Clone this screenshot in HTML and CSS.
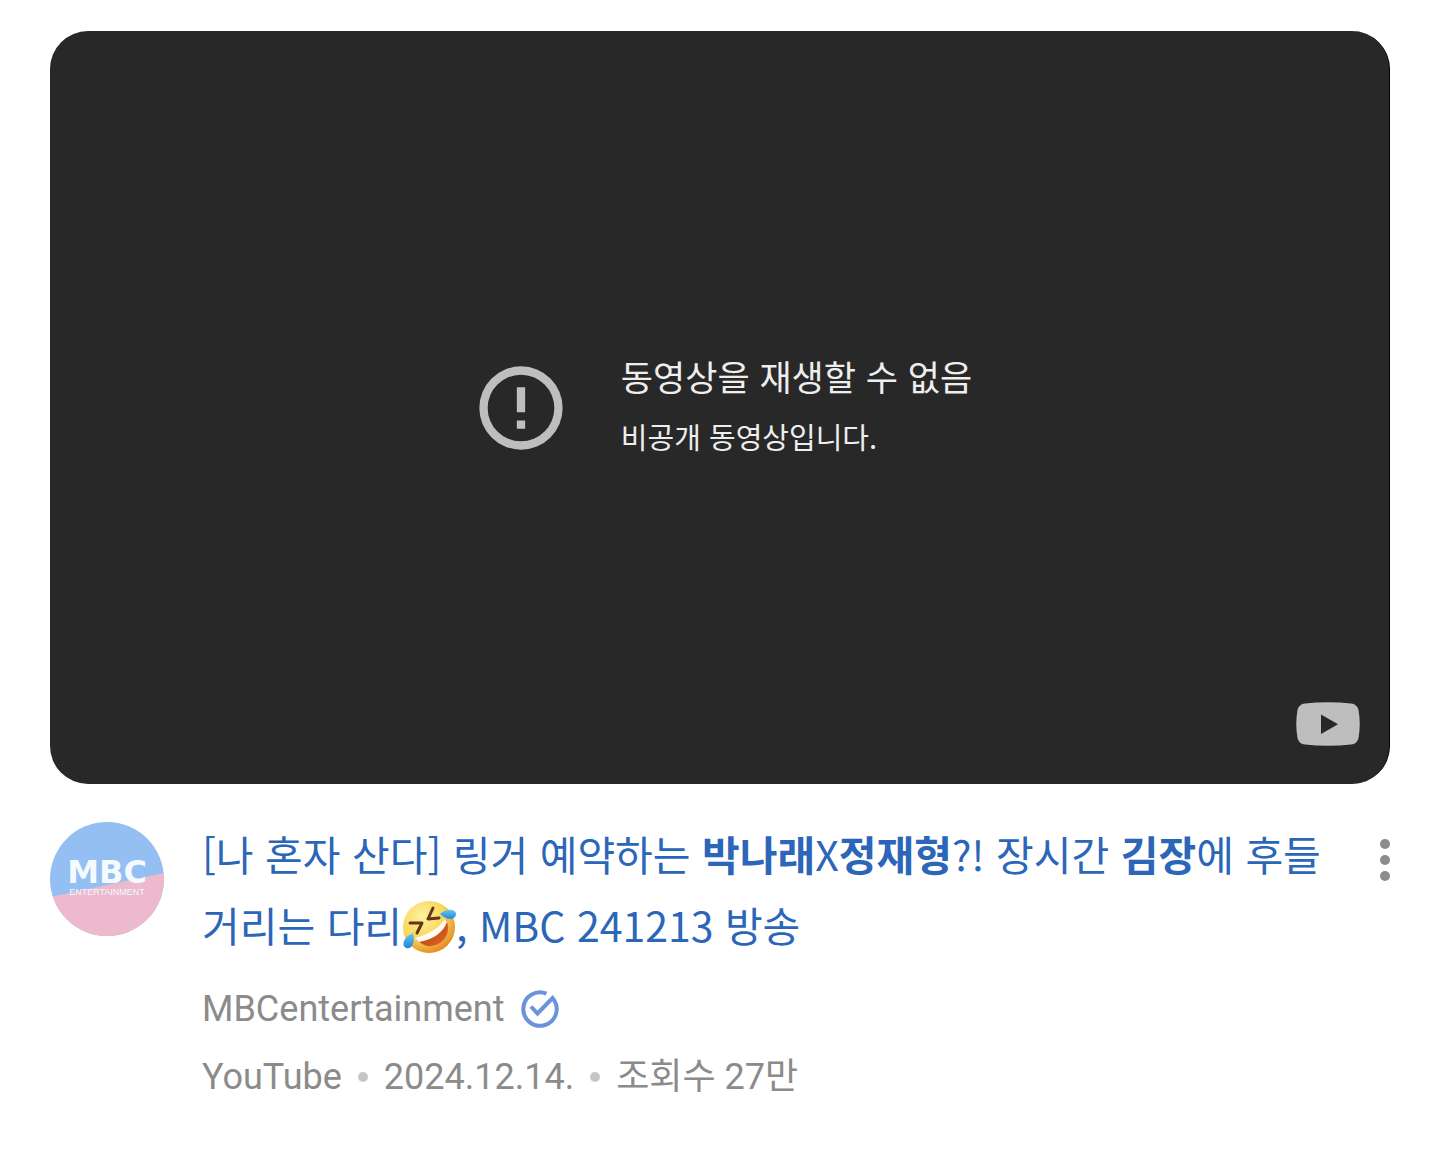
FILE: index.html
```html
<!DOCTYPE html>
<html lang="ko">
<head>
    <meta charset="UTF-8">
    <meta name="viewport" content="width=device-width, initial-scale=1.0">
    <title>MBCentertainment</title>
    <link rel="stylesheet" href="styles.css">
</head>
<body>
    <article class="card">
        <div class="player">
            <div class="error">
                <svg class="error-icon" viewBox="0 0 24 24" aria-hidden="true">
                    <path d="M11 7h2v6h-2zM11 15h2v2h-2zM12 2a10 10 0 1 0 0 20a10 10 0 0 0 0-20zM12 20a8 8 0 1 1 0-16a8 8 0 0 1 0 16z"/>
                </svg>
                <div class="error-text">
                    <p class="error-reason">동영상을 재생할 수 없음</p>
                    <p class="error-detail">비공개 동영상입니다.</p>
                </div>
            </div>
            <a class="youtube" href="#" aria-label="YouTube">
                <svg viewBox="0 0 64 44">
                    <path fill-rule="evenodd" d="M9 1.5Q32-1 55 1.5Q61 2 62.5 8Q65 22 62.5 36Q61 42 55 42.5Q32 45 9 42.5Q3 42 1.5 36Q-1 22 1.5 8Q3 2 9 1.5zM25 12.500V32L42 22.250z"/>
                </svg>
            </a>
        </div>

        <div class="info">
            <a class="avatar" href="#" aria-label="MBCentertainment">
                <svg viewBox="0 0 114 114">
                    <defs>
                        <clipPath id="round"><circle cx="57" cy="57" r="57"/></clipPath>
                    </defs>
                    <g clip-path="url(#round)">
                        <path fill="#94bff2" d="M0 0h114v114H0z"/>
                        <path fill="#edb9cd" d="M0 75L114 51v63H0z"/>
                    </g>
                    <text class="avatar-name" x="57" y="61" text-anchor="middle">MBC</text>
                    <text class="avatar-label" x="57" y="73" text-anchor="middle">ENTERTAINMENT</text>
                </svg>
            </a>

            <div class="details">
                <h3 class="title">
                    <a href="#">[나 혼자 산다] 링거 예약하는 <b>박나래</b>X<b>정재형</b>?! 장시간 <b>김장</b>에 후들거리는 다리<svg class="emoji" viewBox="0 0 54 54" role="img" aria-label="🤣">
                        <defs>
                            <radialGradient id="face" cx="36%" cy="30%" r="72%">
                                <stop offset="0" stop-color="#fff0a0"/>
                                <stop offset=".6" stop-color="#f8d75c"/>
                                <stop offset="1" stop-color="#e58f25"/>
                            </radialGradient>
                            <linearGradient id="tear" x1="0" y1="0" x2="0" y2="1">
                                <stop offset="0" stop-color="#65c8f6"/>
                                <stop offset="1" stop-color="#1f86db"/>
                            </linearGradient>
                            <linearGradient id="mouth" x1="0" y1="0" x2="1" y2="1">
                                <stop offset="0" stop-color="#a63211"/>
                                <stop offset="1" stop-color="#e46a25"/>
                            </linearGradient>
                        </defs>
                        <circle cx="27" cy="27" r="26" fill="url(#face)"/>
                        <path fill="url(#mouth)" d="M14 39Q36 34 44 19Q50 34 38 43Q25 51 14 39z"/>
                        <path fill="#fffdf2" d="M13 38Q35 32 43 19L45 22Q39 38 17 42z"/>
                        <g fill="none" stroke="#653611" stroke-width="3" stroke-linecap="round" stroke-linejoin="round">
                            <path d="M8 23L20 23L15 33"/>
                            <path d="M31 8L26 19L37 18"/>
                        </g>
                        <path fill="url(#tear)" d="M38 14Q44 9 50 10Q54 11 54 14Q54 18 49 19Q43 19 38 14z"/>
                        <path fill="url(#tear)" d="M11 33Q13 41 10 46Q8 49 4 48Q0 46 2 41Q4 36 11 33z"/>
                    </svg>, MBC 241213 방송</a>
                </h3>
                <div class="channel">
                    <a href="#">MBCentertainment</a>
                    <svg class="verified" viewBox="0 0 38 38" role="img" aria-label="인증됨">
                        <path d="M25.500 3.700A16.700 16.700 0 1 0 33 10L31.500 8L16.500 23.500L10 16.500"/>
                    </svg>
                </div>
                <div class="meta">
                    <span>YouTube</span>
                    <span class="dot"></span>
                    <span>2024.12.14.</span>
                    <span class="dot"></span>
                    <span>조회수 27만</span>
                </div>
            </div>

            <button class="more" type="button" aria-label="더보기">
                <svg viewBox="0 0 10 42">
                    <circle cx="5" cy="5" r="5"/>
                    <circle cx="5" cy="21" r="5"/>
                    <circle cx="5" cy="37" r="5"/>
                </svg>
            </button>
        </div>
    </article>
</body>
</html>
```

FILE: styles.css
```css
* {
    box-sizing: border-box;
}
body {
    margin: 0;
    background: #fff;
    font-family: "Noto Sans CJK KR", sans-serif;
    font-weight: 400;
}
h3, p {
    margin: 0;
}
a {
    color: inherit;
    text-decoration: none;
}
svg {
    display: block;
}
.card {
    padding: 31px 50px;
}
.player {
    position: relative;
    display: flex;
    align-items: center;
    justify-content: center;
    aspect-ratio: 1340 / 753;
    border-right: 1px solid #000;
    border-radius: 38px;
    background: #282828;
}
.error {
    display: flex;
    align-items: center;
    gap: 50px;
    padding-left: 4px;
    color: #eee;
}
.error-icon {
    width: 100px;
    fill: #bebebe;
}
.error-text {
    padding-bottom: 4px;
}
.error-reason {
    font-size: 35px;
    line-height: 60px;
}
.error-detail {
    font-size: 29px;
    line-height: 60px;
}
.youtube {
    position: absolute;
    right: 29px;
    bottom: 38px;
    width: 64px;
    fill: #bebebe;
}
.info {
    display: flex;
    align-items: flex-start;
    margin-top: 34px;
}
.avatar {
    flex: none;
    width: 114px;
    margin: 4px 38px 0 0;
}
.avatar-name {
    fill: #f4fafe;
    font-family: "DejaVu Sans", sans-serif;
    font-size: 32px;
    font-weight: 700;
}
.avatar-label {
    fill: #f4fafe;
    font-family: "Liberation Sans", sans-serif;
    font-size: 9px;
    font-weight: 400;
}
.details {
    flex: 1;
    min-width: 0;
}
.title {
    color: #2b66b8;
    font-size: 41px;
    font-weight: 400;
    line-height: 71px;
}
.title b {
    font-weight: 700;
}
.emoji {
    display: inline-block;
    width: 54px;
    height: 54px;
    vertical-align: -12px;
}
.channel,
.meta {
    display: flex;
    align-items: center;
    gap: 16px;
    color: #8b8b8b;
    font-family: Roboto, "Noto Sans CJK KR", sans-serif;
    font-size: 36px;
    line-height: 68px;
}
.channel {
    margin-top: 15px;
}
.verified {
    width: 38px;
    fill: none;
    stroke: #6b92dc;
    stroke-width: 4;
}
.dot {
    width: 10px;
    height: 10px;
    border-radius: 50%;
    background: #c6c6c6;
}
.more {
    flex: none;
    width: 10px;
    margin: 21px 0 0 48px;
    padding: 0;
    border: 0;
    background: none;
    cursor: pointer;
}
.more svg {
    fill: #8c8c8c;
}
```
